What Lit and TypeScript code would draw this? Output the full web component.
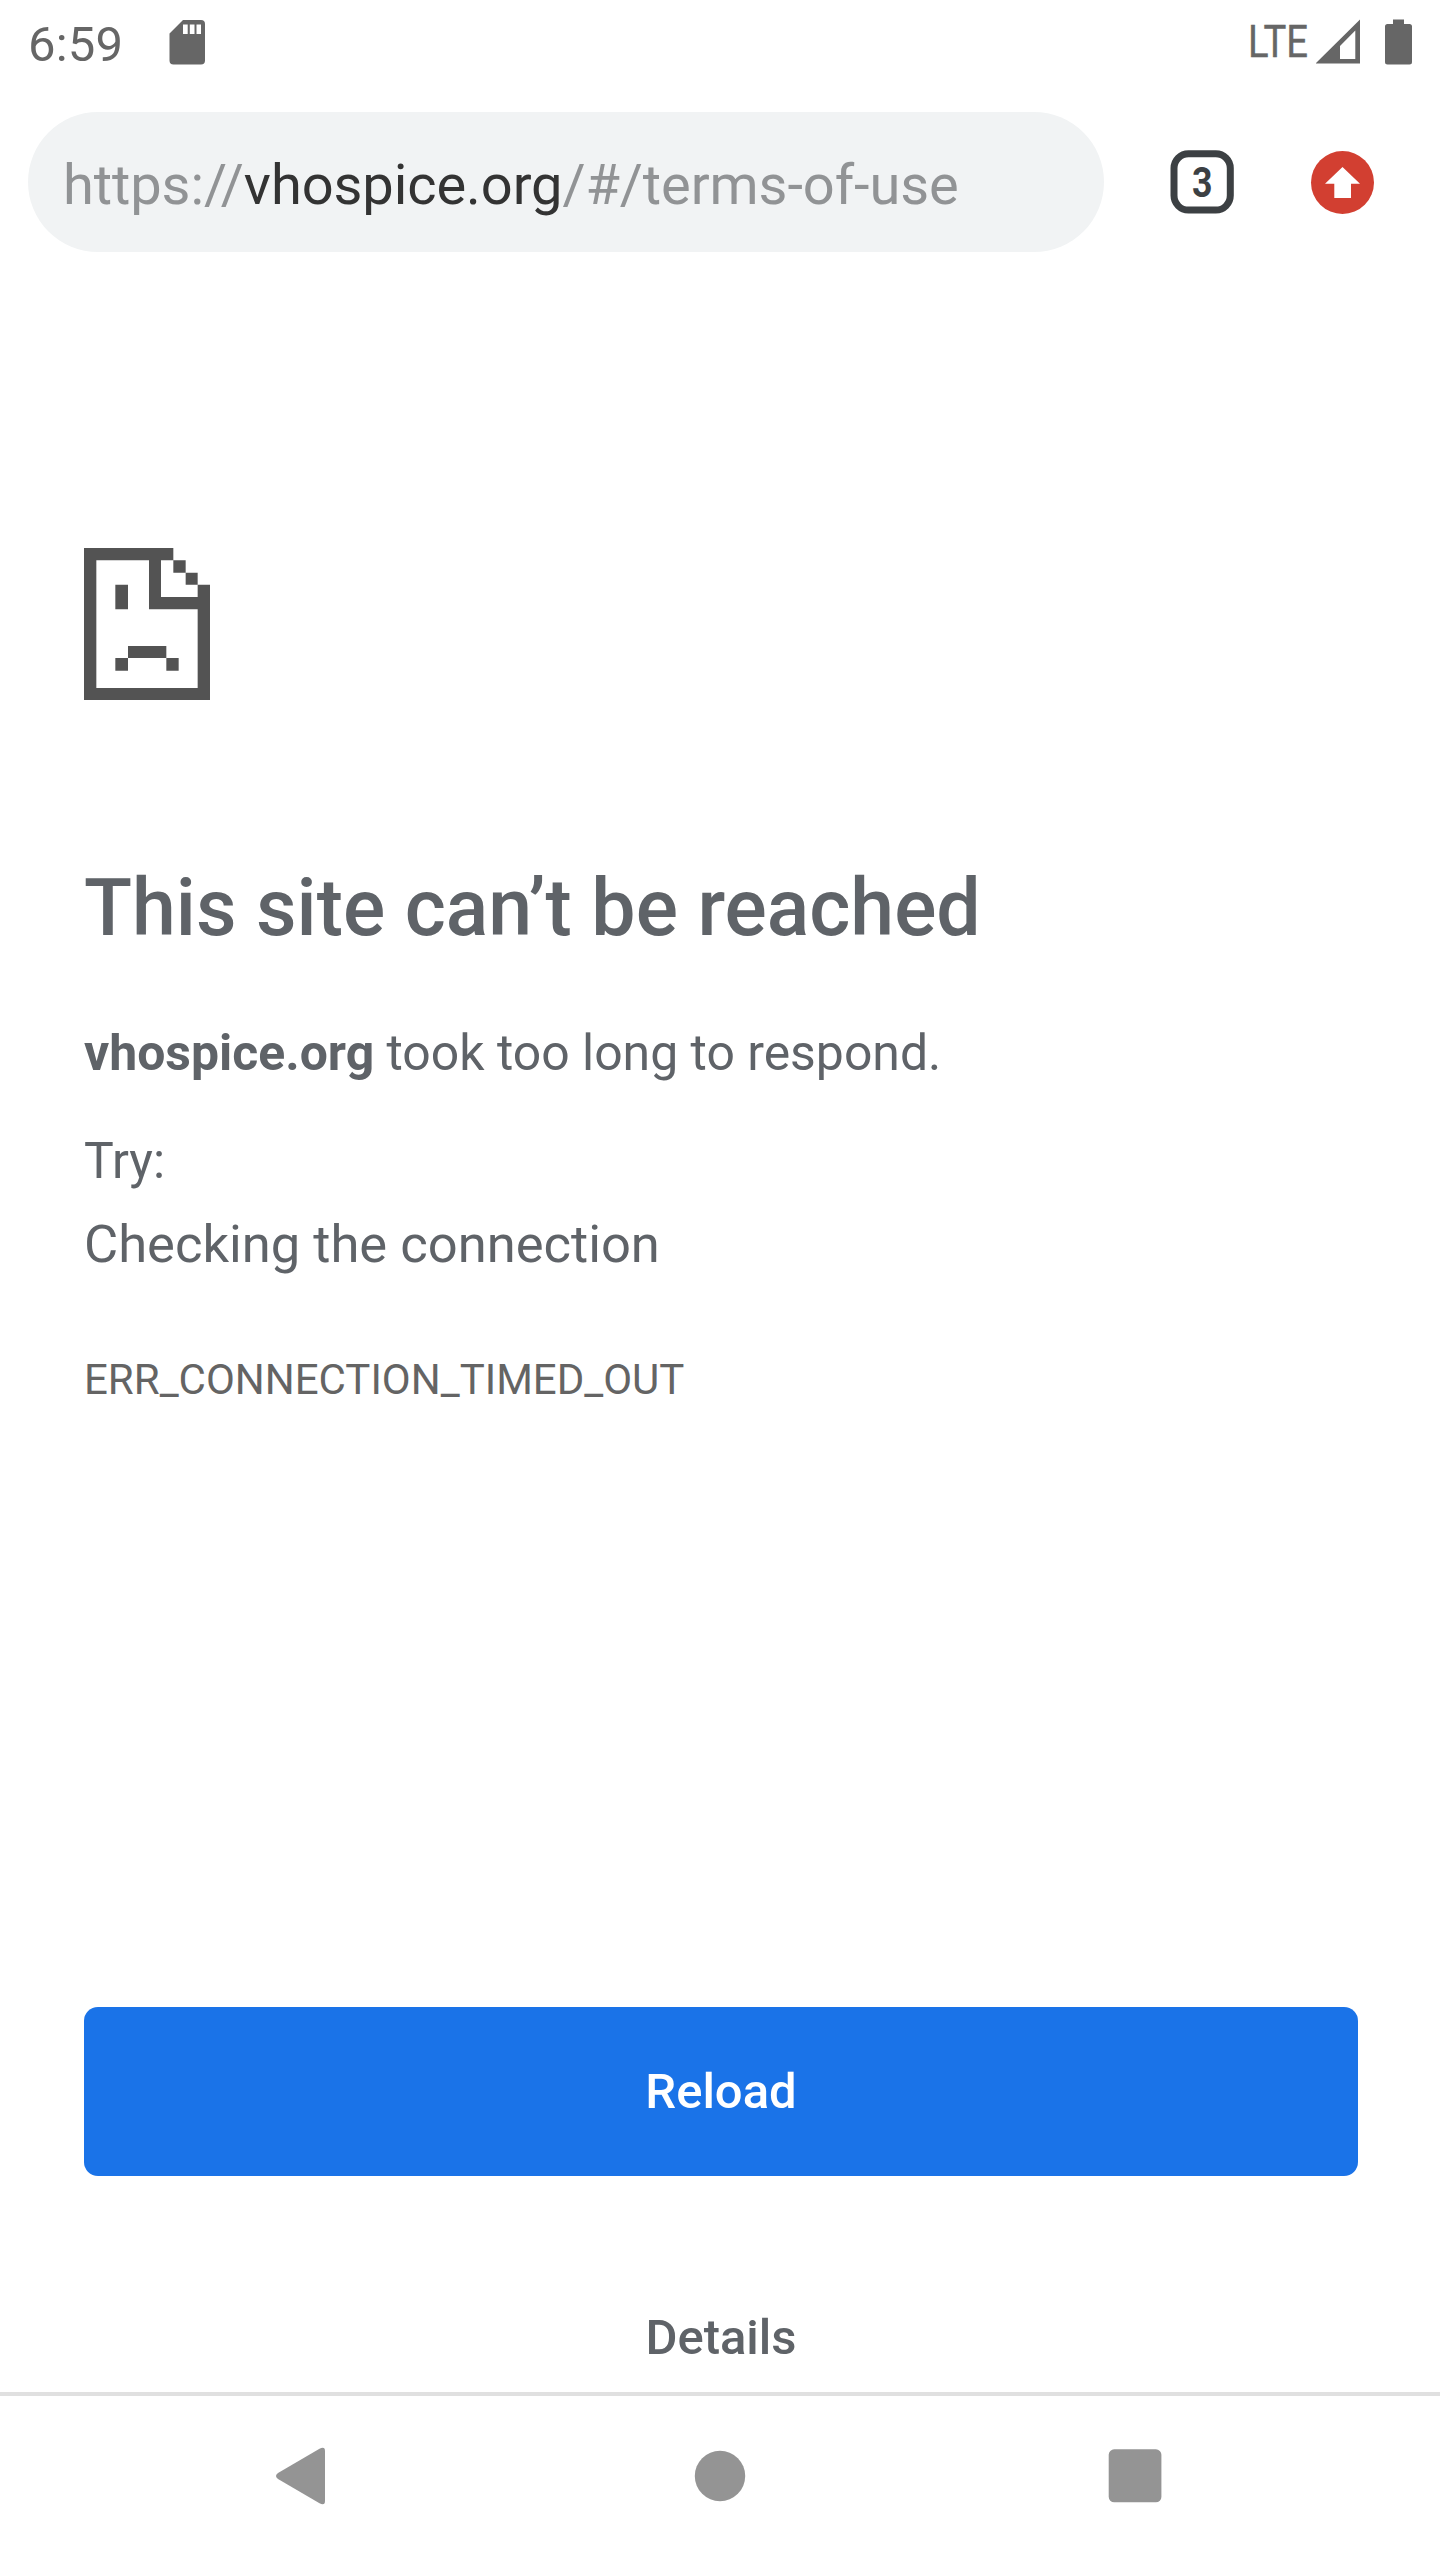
import { LitElement, html, css } from "lit";
import { customElement } from "lit/decorators.js";

@customElement("status-bar")
class StatusBar extends LitElement {
  static styles = css`
    :host { display: flex; flex: none; height: 84px; box-sizing: border-box; padding: 19px 27px 0 28px; color: #666; font: 400 49px/51px Roboto, sans-serif; }
    .clock { width: 141px; letter-spacing: 0.2px; }
    .grow { flex: 1; }
    svg { display: block; fill: #666; flex: none; }
    .lte { margin-right: 7px; overflow: visible; }
    .battery { margin-left: 25px; }
  `;
  render() {
    return html`
      <span class="clock">6:59</span>
      <svg width="37" height="46" viewBox="169 19 37 46">
        <path fill-rule="evenodd" d="M183 20H201Q205 20 205 24V60.5Q205 64.5 201 64.5H173.500Q169.500 64.500 169.500 60.500V33.500ZM183 24.500V34H187.700V24.500ZM189.800 24.500V34H194.500V24.500ZM196.500 24.500V34H201V24.500Z" />
      </svg>
      <span class="grow"></span>
      <svg class="lte" width="62" height="46" viewBox="1247 19 62 46">
        <text x="1248" y="57" font-size="43.500" textLength="60" lengthAdjust="spacingAndGlyphs" stroke="#666" stroke-width="0.4">LTE</text>
      </svg>
      <svg width="44" height="45" viewBox="1316 19 44 45">
        <path fill-rule="evenodd" d="M1315.500 63.500L1360 19.500V63.500ZM1340 46V59H1355.300V30.500Z" />
      </svg>
      <svg class="battery" width="28" height="46" viewBox="1385 19 28 46">
        <path d="M1393 19.500H1404V24H1409.500Q1412 24 1412 26.500V62Q1412 64.500 1409.500 64.500H1387.500Q1385 64.500 1385 62V26.500Q1385 24 1387.500 24H1393Z" />
      </svg>
    `;
  }
}

@customElement("browser-toolbar")
class BrowserToolbar extends LitElement {
  static styles = css`
    :host { display: flex; flex: none; align-items: center; height: 196px; box-sizing: border-box; padding: 0 28px 0; }
    .url { width: 1076px; height: 140px; box-sizing: border-box; padding: 3px 0 0 35px; border-radius: 70px; background: #f1f3f4; color: #919395; font: 400 56px/140px Roboto, sans-serif; letter-spacing: -0.08px; white-space: nowrap; }
    .host { color: #333; }
    svg { display: block; flex: none; }
    .tabs { margin-left: 66px; }
    .update { margin-left: 76px; }
    text { font: 700 42px Roboto, sans-serif; fill: #3c4043; }
  `;
  render() {
    return html`
      <div class="url">https://<span class="host">vhospice.org</span>/#/terms-of-use</div>
      <svg class="tabs" width="64" height="64" viewBox="1170 150 64 64">
        <rect x="1174" y="153.800" width="56.300" height="56.300" rx="14.500" fill="none" stroke="#3c4043" stroke-width="7" />
        <text x="1192" y="196.500" textLength="20.500" lengthAdjust="spacingAndGlyphs">3</text>
      </svg>
      <svg class="update" width="64" height="64" viewBox="1310 150 64 64">
        <circle cx="1342.500" cy="182.500" r="31.500" fill="#d23f31" />
        <path d="M1342.500 167L1360 183.700H1351V198H1334.300V183.700H1325Z" fill="#fff" />
      </svg>
    `;
  }
}

@customElement("error-page")
class ErrorPage extends LitElement {
  static styles = css`
    :host { display: flex; flex-direction: column; flex: 1; min-height: 0; overflow: hidden; box-sizing: border-box; padding: 267.670px 82px 0 84px; color: #5f6368; font: 400 49.900px/74px Roboto, sans-serif; }
    .sad { display: block; flex: none; fill: #535353; }
    h1 { flex: none; margin: 159px 0 0; font-size: 78.800px; font-weight: 500; line-height: 98px; }
    p { flex: none; margin: 0; }
    .reason { margin-top: 59px; }
    .try { margin-top: 34px; }
    .tip { margin-top: 9px; font-size: 52.500px; }
    .code { margin-top: 62.500px; font-size: 42px; color: #646464; }
    button { display: block; flex: none; border: 0; padding: 0; height: 168.670px; border-radius: 14px; font: 500 49px/168px Roboto, sans-serif; }
    .reload { margin-top: 589.500px; padding-top: 1px; background: #1a73e8; color: #fff; }
    .details { margin-top: 77.600px; background: none; color: #5f6368; }
  `;
  render() {
    return html`
      <svg class="sad" width="126.330" height="152.330" viewBox="72 83 379 457">
        <path fill-rule="evenodd" d="M72 83H340V120H377V157H413V193H450V540H72ZM109 120V503H413V267H267V120ZM303 120V230H413V193H377V157H340V120Z" />
        <path d="M166 193H204V267H166ZM204 377H319V413H204ZM166 413H204V451H166ZM319 413H356V451H319Z" />
      </svg>
      <h1>This site can’t be reached</h1>
      <p class="reason"><strong>vhospice.org</strong> took too long to respond.</p>
      <p class="try">Try:</p>
      <p class="tip">Checking the connection</p>
      <p class="code">ERR_CONNECTION_TIMED_OUT</p>
      <button class="reload">Reload</button>
      <button class="details">Details</button>
    `;
  }
}

@customElement("nav-bar")
class NavBar extends LitElement {
  static styles = css`
    :host { display: flex; flex: none; height: 168px; box-sizing: border-box; border-top: 4px solid #e0e0e0; padding: 51px 278px 0 275px; justify-content: space-between; background: #fff; }
    svg { display: block; fill: #949494; }
  `;
  render() {
    return html`
      <svg width="52" height="60" viewBox="275 2447 52 60">
        <path d="M319.500 2448.700Q325 2446 325 2451V2501Q325 2506 319.500 2503.300L278 2479Q274 2476 278 2473Z" />
      </svg>
      <svg width="57" height="60" viewBox="689 2447 57 60"><circle cx="720" cy="2476" r="25.200" /></svg>
      <svg width="54" height="60" viewBox="1108 2447 54 60"><rect x="1108.700" y="2449.300" width="52.700" height="53" rx="5.500" /></svg>
    `;
  }
}

@customElement("app-root")
class AppRoot extends LitElement {
  static styles = css`
    :host { display: flex; flex-direction: column; width: 1440px; height: 2560px; overflow: hidden; background: #fff; }
  `;
  render() {
    return html`<status-bar></status-bar><browser-toolbar></browser-toolbar><error-page></error-page><nav-bar></nav-bar>`;
  }
}
